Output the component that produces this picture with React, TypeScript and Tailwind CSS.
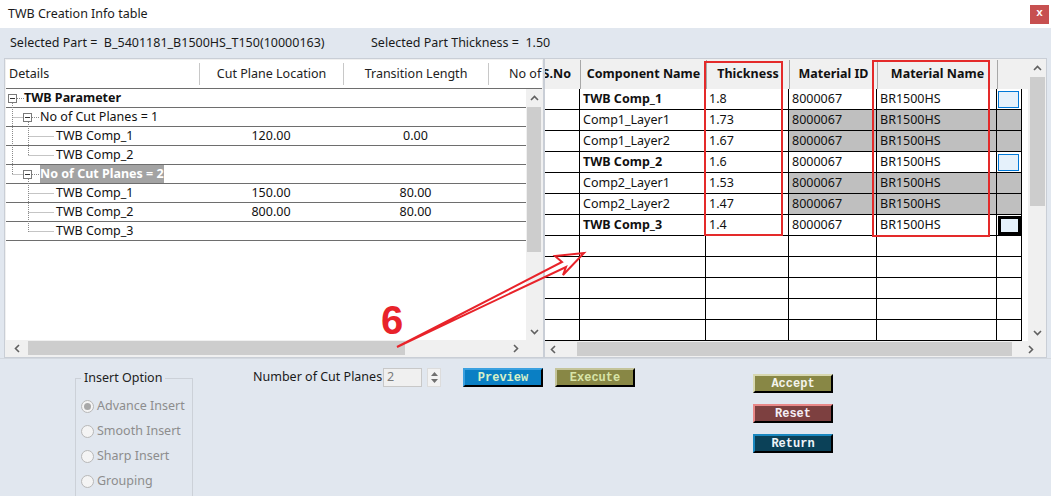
import type { ReactNode } from "react";

type TreeRow = {
  label: string;
  level: 0 | 1 | 2;
  bold?: boolean;
  selected?: boolean;
  cut?: string;
  trans?: string;
};

const treeRows: TreeRow[] = [
  { label: "TWB Parameter", level: 0, bold: true },
  { label: "No of Cut Planes = 1", level: 1 },
  { label: "TWB Comp_1", level: 2, cut: "120.00", trans: "0.00" },
  { label: "TWB Comp_2", level: 2 },
  { label: "No of Cut Planes = 2", level: 1, bold: true, selected: true },
  { label: "TWB Comp_1", level: 2, cut: "150.00", trans: "80.00" },
  { label: "TWB Comp_2", level: 2, cut: "800.00", trans: "80.00" },
  { label: "TWB Comp_3", level: 2 },
];

type CompRow = {
  name: string;
  thickness: string;
  layer: boolean;
  check?: "blue" | "black";
};

const compRows: CompRow[] = [
  { name: "TWB Comp_1", thickness: "1.8", layer: false, check: "blue" },
  { name: "Comp1_Layer1", thickness: "1.73", layer: true },
  { name: "Comp1_Layer2", thickness: "1.67", layer: true },
  { name: "TWB Comp_2", thickness: "1.6", layer: false, check: "blue" },
  { name: "Comp2_Layer1", thickness: "1.53", layer: true },
  { name: "Comp2_Layer2", thickness: "1.47", layer: true },
  { name: "TWB Comp_3", thickness: "1.4", layer: false, check: "black" },
];

const padLeft = { 0: "pl-[18px]", 1: "pl-[34px]", 2: "pl-[50px]" } as const;

function Chevron({ dir }: { dir: "up" | "down" | "left" | "right" }) {
  const pts = {
    up: "1,6 4.5,2.5 8,6",
    down: "1,3 4.5,6.5 8,3",
    left: "6,1 2.5,4.5 6,8",
    right: "3,1 6.5,4.5 3,8",
  }[dir];
  return (
    <svg width="9" height="9" viewBox="0 0 9 9">
      <polyline points={pts} fill="none" stroke="#606060" strokeWidth="1.6" />
    </svg>
  );
}

function TreeGuides() {
  const box = (x: number, y: number) => (
    <g key={`${x}-${y}`}>
      <rect x={x + 0.5} y={y + 0.5} width="8" height="8" fill="white" stroke="#7a7a7a" />
      <line x1={x + 2} y1={y + 4.5} x2={x + 7} y2={y + 4.5} stroke="#333" />
    </g>
  );
  const dot = { stroke: "#8a8a8a", strokeDasharray: "1 1" };
  return (
    <svg className="pointer-events-none absolute left-0 top-0" width="60" height="160">
      <line x1="6.5" y1="14" x2="6.5" y2="86" {...dot} />
      <line x1="11" y1="9.5" x2="18" y2="9.5" {...dot} />
      <line x1="6.5" y1="28.5" x2="17" y2="28.5" {...dot} />
      <line x1="26" y1="28.5" x2="33" y2="28.5" {...dot} />
      <line x1="6.5" y1="85.5" x2="17" y2="85.5" {...dot} />
      <line x1="26" y1="85.5" x2="33" y2="85.5" {...dot} />
      <line x1="22.5" y1="33" x2="22.5" y2="67" {...dot} />
      <line x1="22.5" y1="90" x2="22.5" y2="143" {...dot} />
      {[47.5, 66.5, 104.5, 123.5, 142.5].map((y) => (
        <line key={y} x1="22.5" y1={y} x2="48" y2={y} {...dot} />
      ))}
      {box(2, 5)}
      {box(17, 24)}
      {box(17, 81)}
    </svg>
  );
}

function LeftPanel() {
  return (
    <div className="flex h-[300px] w-[540px] flex-col border border-[#c9ced6] bg-[#f0f0f0] p-px">
      <div className="flex h-[29px] shrink-0 overflow-hidden border-b border-[#6e6e6e] bg-white text-[#222]">
        <div className="flex w-[193px] shrink-0 items-center pl-[3px]">Details</div>
        <div className="my-[3px] flex w-[144px] shrink-0 items-center justify-center border-l border-[#c8c8c8]">
          Cut Plane Location
        </div>
        <div className="my-[3px] flex w-[145px] shrink-0 items-center justify-center border-l border-[#c8c8c8]">
          Transition Length
        </div>
        <div className="my-[3px] flex w-[80px] shrink-0 items-center whitespace-nowrap border-l border-[#c8c8c8] pl-[20px]">
          No of Cut
        </div>
      </div>
      <div className="flex min-h-0 flex-1">
        <div className="relative flex-1 bg-white">
          <TreeGuides />
          {treeRows.map((r, i) => (
            <div
              key={i}
              className="grid h-[19px] grid-cols-[193px_144px_145px_1fr] border-b border-[#6e6e6e] leading-[18px] text-[#111]"
            >
              <div className={`${padLeft[r.level]} whitespace-nowrap`}>
                <span className={`${r.bold ? "font-bold" : ""} ${r.selected ? "bg-[#a3a3a3] text-white" : ""} inline-block`}>
                  {r.label}
                </span>
              </div>
              <div className="text-center">{r.cut}</div>
              <div className="text-center">{r.trans}</div>
              <div />
            </div>
          ))}
        </div>
        <div className="flex w-[16px] shrink-0 flex-col items-center bg-[#f0f0f0]">
          <div className="flex h-[18px] items-center">
            <Chevron dir="up" />
          </div>
          <div className="h-[145px] w-[14px] bg-[#cdcdcd]" />
          <div className="flex-1" />
          <div className="flex h-[17px] items-center">
            <Chevron dir="down" />
          </div>
        </div>
      </div>
      <div className="flex h-[16px] shrink-0 items-center bg-[#f0f0f0]">
        <div className="flex w-[22px] justify-center">
          <Chevron dir="left" />
        </div>
        <div className="h-[14px] w-[377px] bg-[#cdcdcd]" />
        <div className="flex-1" />
        <div className="flex w-[22px] justify-center">
          <Chevron dir="right" />
        </div>
        <div className="w-[16px]" />
      </div>
    </div>
  );
}

const gridCols = "grid grid-cols-[35px_126px_83px_88px_120px_25px]";

function Cell({ children, gray, bold, className = "" }: { children?: ReactNode; gray?: boolean; bold?: boolean; className?: string }) {
  return (
    <div
      className={`flex h-[21px] items-center overflow-hidden whitespace-nowrap border-b border-r border-black pl-[3px] ${
        gray ? "bg-[#bfbfbf]" : "bg-white"
      } ${bold ? "font-bold" : ""} ${className}`}
    >
      {children}
    </div>
  );
}

function RightPanel() {
  return (
    <div className="flex h-[300px] w-[503px] flex-col border border-[#c9ced6] bg-[#f0f0f0] pt-px">
      <div className="flex min-h-0 flex-1">
        <div className="w-[483px] overflow-hidden bg-white text-[#111]">
          <div className={`${gridCols} h-[29px] bg-[#f0f0f0] font-bold`}>
            <div className="flex items-center justify-end overflow-hidden whitespace-nowrap pr-[9px]">S.No</div>
            {["Component Name", "Thickness", "Material ID", "Material Name", ""].map((h, i) => (
              <div key={i} className="flex items-center justify-center border-l border-[#a8a8a8]">
                {h}
              </div>
            ))}
          </div>
          {compRows.map((r, i) => (
            <div key={i} className={gridCols}>
              <Cell />
              <Cell bold={!r.layer}>{r.name}</Cell>
              <Cell>{r.thickness}</Cell>
              <Cell gray={r.layer}>8000067</Cell>
              <Cell gray={r.layer}>BR1500HS</Cell>
              <Cell gray={r.layer} className="!pl-[1px]">
                {r.check === "blue" && <div className="h-[17px] w-[21px] border border-[#0078d7] bg-[#e5f1fb]" />}
                {r.check === "black" && <div className="h-[19px] w-[23px] border-[3px] border-black bg-[#e5f1fb]" />}
              </Cell>
            </div>
          ))}
          {[0, 1, 2, 3, 4].map((i) => (
            <div key={i} className={gridCols}>
              {[0, 1, 2, 3, 4, 5].map((j) => (
                <Cell key={j} />
              ))}
            </div>
          ))}
        </div>
        <div className="w-[1px]" />
        <div className="flex w-[17px] shrink-0 flex-col items-center bg-[#f0f0f0]">
          <div className="flex h-[17px] items-center">
            <Chevron dir="up" />
          </div>
          <div className="h-[129px] w-[15px] bg-[#cdcdcd]" />
          <div className="flex-1" />
          <div className="flex h-[17px] items-center">
            <Chevron dir="down" />
          </div>
        </div>
      </div>
      <div className="flex h-[16px] shrink-0 items-center bg-[#f0f0f0]">
        <div className="flex w-[32px] justify-start pl-[4px]">
          <Chevron dir="left" />
        </div>
        <div className="h-[14px] w-[435px] bg-[#cdcdcd]" />
        <div className="flex-1" />
        <div className="flex w-[26px] justify-center">
          <Chevron dir="right" />
        </div>
        <div className="w-[3px]" />
      </div>
    </div>
  );
}

function Radio({ label, checked }: { label: string; checked?: boolean }) {
  return (
    <div className="flex h-[25px] items-center gap-[3px] whitespace-nowrap text-[#8d8d8d]">
      <span className="flex h-[13px] w-[13px] shrink-0 items-center justify-center rounded-full border border-[#b8b8b8] bg-[#f4f4f4]">
        {checked && <span className="h-[7px] w-[7px] rounded-full bg-[#a8a8a8]" />}
      </span>
      {label}
    </div>
  );
}

function RetroButton({ label, className }: { label: string; className: string }) {
  return (
    <button
      className={`flex h-[19px] w-[80px] shrink-0 items-center justify-center border-[2px] border-b-black border-r-black font-['Liberation_Mono',monospace] text-[12px] font-bold ${className}`}
    >
      {label}
    </button>
  );
}

export default function App() {
  return (
    <div className="relative h-[496px] w-[1051px] overflow-hidden bg-[#e1e7ef] font-['Noto_Sans',sans-serif] text-[12.5px] text-black">
      <div className="flex h-[28px] items-center justify-between bg-white pl-[8px] pr-[2px]">
        <span className="text-[#1a1a1a]">TWB Creation Info table</span>
        <div className="flex h-[19px] w-[19px] items-center justify-center bg-[#c75050] pb-[2px] font-['Liberation_Mono',monospace] text-[11px] font-bold text-white">
          x
        </div>
      </div>
      <div className="flex h-[30px] items-center pl-[10px] text-[#1a1a1a]">
        <span className="w-[361px] whitespace-pre">Selected Part =  B_5401181_B1500HS_T150(10000163)</span>
        <span className="whitespace-pre">Selected Part Thickness =  1.50</span>
      </div>
      <div className="flex pl-[4px]">
        <LeftPanel />
        <RightPanel />
      </div>
      <div className="flex h-[138px] items-start border-t border-[#d3d8df]">
        <fieldset className="ml-[75px] mt-[10px] h-[140px] w-[118px] shrink-0 border border-[#ccd1d8] px-[5px]">
          <legend className="px-[3px] text-[#222]">Insert Option</legend>
          <div className="mt-[6px]">
            <Radio label="Advance Insert" checked />
            <Radio label="Smooth Insert" />
            <Radio label="Sharp Insert" />
            <Radio label="Grouping" />
          </div>
        </fieldset>
        <div className="ml-[60px] mt-[9px] flex w-[380px] shrink-0 items-center">
          <span className="w-[130px] shrink-0 whitespace-nowrap text-[#1a1a1a]">Number of Cut Planes</span>
          <div className="flex h-[19px] w-[39px] shrink-0 items-center border border-[#c8c8c8] bg-[#f0f0f0] pl-[3px] text-[#7a7a7a]">
            2
          </div>
          <div className="ml-[5px] flex h-[19px] w-[14px] shrink-0 flex-col items-center justify-center gap-[3px] border border-[#dcdcdc] bg-[#f2f2f2]">
            <svg width="7" height="4" viewBox="0 0 7 4">
              <polygon points="0,4 3.5,0 7,4" fill="#707070" />
            </svg>
            <svg width="7" height="4" viewBox="0 0 7 4">
              <polygon points="0,0 3.5,4 7,0" fill="#707070" />
            </svg>
          </div>
          <RetroButton label="Preview" className="ml-[22px] w-[79px] border-l-[#3aa0e0] border-t-[#3aa0e0] bg-[#0a7fc4] text-[#d8f0c8]" />
          <RetroButton label="Execute" className="ml-[12px] w-[78px] border-l-[#c4c49a] border-t-[#c4c49a] bg-[#888745] text-[#d8e4a8]" />
        </div>
        <div className="ml-[120px] mt-[15px] flex flex-col gap-[11px]">
          <RetroButton label="Accept" className="border-l-[#d8d8b0] border-t-[#d8d8b0] bg-[#888745] text-[#f4f4ec]" />
          <RetroButton label="Reset" className="border-l-[#e88888] border-t-[#e88888] bg-[#7d4040] text-[#f4eef4]" />
          <RetroButton label="Return" className="border-l-[#1a88c0] border-t-[#1a88c0] bg-[#0b4158] text-[#eef4f8]" />
        </div>
      </div>

      {/* annotation overlay */}
      <div className="pointer-events-none absolute left-[704px] top-[61px] h-[175px] w-[79px] border-2 border-[#e42a2a]" />
      <div className="pointer-events-none absolute left-[872px] top-[60px] h-[177px] w-[118px] border-2 border-[#e42a2a]" />
      <svg className="pointer-events-none absolute left-0 top-0" width="1051" height="496">
        <polygon
          points="397,347 562,262 555,256 584,253 563,275 566,267"
          fill="none"
          stroke="#e8232a"
          strokeWidth="2"
          strokeLinejoin="miter"
        />
      </svg>
      <span className="pointer-events-none absolute left-[381px] top-[296px] font-['Liberation_Sans',sans-serif] text-[40px] leading-[48px] font-bold text-[#e8232a] [text-shadow:0_0_2px_white,1px_1px_1px_white,-1px_-1px_1px_white]">
        6
      </span>
    </div>
  );
}
